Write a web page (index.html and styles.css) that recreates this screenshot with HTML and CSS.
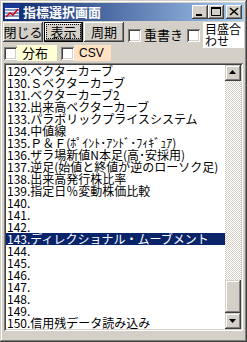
FILE: index.html
```html
<!DOCTYPE html>
<html lang="ja">
<head>
    <meta charset="UTF-8">
    <title>指標選択画面</title>
    <link rel="stylesheet" href="styles.css">
</head>
<body>
    <div class="window">
        <div class="titlebar">
            <svg class="app-icon" width="16" height="16" viewBox="0 0 16 16">
                <rect x="0" y="0" width="16" height="16" fill="#1a3a9a"/>
                <rect x="1" y="1" width="14" height="14" fill="#fff"/>
                <rect x="1" y="1" width="14" height="3" fill="#1a3a9a"/>
                <path d="M1 6h14M1 9h14M1 12h14" stroke="#1a3a9a" stroke-width="1"/>
                <path d="M2 13l4-4 3 2 5-6" stroke="#e00000" stroke-width="1.5" fill="none"/>
            </svg>
            <span class="title">指標選択画面</span>
            <div class="caption-buttons">
                <span class="cap-btn">
                    <svg width="16" height="14" viewBox="0 0 16 14"><rect x="4" y="9" width="6" height="2" fill="#000"/></svg>
                </span>
                <span class="cap-btn">
                    <svg width="16" height="14" viewBox="0 0 16 14"><path d="M3.5 2.5h9v8h-9z" stroke="#000" fill="none"/><rect x="3" y="2" width="10" height="2" fill="#000"/></svg>
                </span>
                <span class="cap-btn close">
                    <svg width="16" height="14" viewBox="0 0 16 14"><path d="M4 3l8 7M12 3l-8 7" stroke="#000" stroke-width="1.6"/></svg>
                </span>
            </div>
        </div>

        <div class="client">
            <div class="toolbar">
                <button class="btn">閉じる</button>
                <button class="btn default"><span class="focus">表示</span></button>
                <button class="btn">周期</button>
                <label class="check overwrite"><span class="box"></span><span class="label">重書き</span></label>
                <label class="check scale"><span class="box"></span><span class="label white">目盛合<br>わせ</span></label>
            </div>

            <div class="options">
                <label class="check"><span class="box"></span><span class="label yellow">分布</span></label>
                <label class="check"><span class="box"></span><span class="label peach">CSV</span></label>
            </div>

            <div class="listbox">
                <ul class="items">
                    <li>129.ベクターカーブ</li>
                    <li>130.Ｓベクターカーブ</li>
                    <li>131.ベクターカーブ2</li>
                    <li>132.出来高ベクターカーブ</li>
                    <li>133.パラボリックプライスシステム</li>
                    <li>134.中値線</li>
                    <li>135.Ｐ＆Ｆ(ﾎﾟｲﾝﾄ･ｱﾝﾄﾞ･ﾌｨｷﾞｭｱ)</li>
                    <li>136.ザラ場新値N本足(高･安採用)</li>
                    <li>137.逆足(始値と終値が逆のローソク足)</li>
                    <li>138.出来高発行株比率</li>
                    <li>139.指定日％変動株価比較</li>
                    <li>140.</li>
                    <li>141.</li>
                    <li>142.</li>
                    <li class="selected">143.ディレクショナル・ムーブメント</li>
                    <li>144.</li>
                    <li>145.</li>
                    <li>146.</li>
                    <li>147.</li>
                    <li>148.</li>
                    <li>149.</li>
                    <li>150.信用残データ読み込み</li>
                </ul>
                <div class="scrollbar">
                    <span class="arrow-btn">
                        <svg width="16" height="16" viewBox="0 0 16 16"><path d="M4 9h7l-3.5-4z" fill="#000"/></svg>
                    </span>
                    <div class="track">
                        <span class="thumb"></span>
                    </div>
                    <span class="arrow-btn">
                        <svg width="16" height="16" viewBox="0 0 16 16"><path d="M4 6h7l-3.5 4z" fill="#000"/></svg>
                    </span>
                </div>
            </div>
        </div>
    </div>
</body>
</html>
```

FILE: styles.css
```css
body {
    margin: 0;
    font-family: "Noto Sans CJK JP", "Liberation Sans", sans-serif;
    font-size: 12px;
}

.window {
    width: 247px;
    height: 342px;
    box-sizing: border-box;
    padding: 3px;
    background: #d4d0c8;
    box-shadow: inset -1px -1px #404040, inset 1px 1px #d4d0c8,
                inset -2px -2px #808080, inset 2px 2px #fff;
    display: flex;
    flex-direction: column;
}

/* title bar */
.titlebar {
    height: 18px;
    flex: none;
    display: flex;
    align-items: center;
    padding-left: 1px;
    background: linear-gradient(to right, #0a246a, #a6caf0);
}

.app-icon {
    flex: none;
}

.title {
    margin-left: 3px;
    color: #fff;
    font-weight: bold;
    font-size: 13px;
    line-height: 16px;
    white-space: nowrap;
}

.caption-buttons {
    margin-left: auto;
    margin-right: 2px;
    display: flex;
}

.cap-btn {
    width: 16px;
    height: 14px;
    background: #d4d0c8;
    box-shadow: inset -1px -1px #404040, inset 1px 1px #fff,
                inset -2px -2px #808080, inset 2px 2px #d4d0c8;
}

.cap-btn svg {
    display: block;
}

.cap-btn.close {
    margin-left: 2px;
}

/* client area */
.client {
    flex: 1;
    display: flex;
    flex-direction: column;
    padding-top: 1px;
}

.toolbar {
    display: flex;
    align-items: flex-start;
    height: 26px;
    flex: none;
}

.btn {
    flex: none;
    width: 40px;
    height: 20px;
    margin: 0 1px 0 0;
    padding: 0;
    border: none;
    background: #d4d0c8;
    font-family: inherit;
    font-size: 13px;
    line-height: 14px;
    color: #000;
    white-space: nowrap;
    box-shadow: inset -1px -1px #404040, inset 1px 1px #fff,
                inset -2px -2px #808080, inset 2px 2px #d4d0c8;
}

.btn.default {
    width: 39px;
    box-shadow: inset 0 0 0 1px #000, inset -2px -2px #404040, inset 2px 2px #fff,
                inset -3px -3px #808080;
}

.btn.default .focus {
    display: inline-block;
    padding: 0 3px;
    line-height: 13px;
    outline: 1px dotted #000;
}

.check {
    display: flex;
    align-items: center;
    flex: none;
}

.label {
    white-space: nowrap;
}

.box {
    flex: none;
    width: 13px;
    height: 13px;
    background: #fff;
    box-shadow: inset 1px 1px #808080, inset -1px -1px #fff,
                inset 2px 2px #404040, inset -2px -2px #d4d0c8;
}

.overwrite {
    margin: 6px 0 0 3px;
}

.overwrite .label {
    margin-left: 3px;
    font-size: 13px;
    line-height: 14px;
}

.scale {
    margin-left: 4px;
}

.label.white {
    margin-left: 3px;
    width: 41px;
    height: 26px;
    padding: 1px 0 0 2px;
    box-sizing: border-box;
    background: #fff;
    font-size: 12px;
    line-height: 12px;
}

.options {
    display: flex;
    height: 16px;
    margin-top: -3px;
    gap: 3px;
    flex: none;
}

.options .check {
    align-items: stretch;
}

.options .box {
    margin-top: 2px;
    margin-left: 1px;
}

.options .label {
    padding: 0 3px 0 5px;
    font-size: 13px;
    line-height: 16px;
}

.label.yellow {
    width: 32px;
    background: #ffffd4;
}

.label.peach {
    width: 29px;
    background: #ffe2c4;
    font-family: "Liberation Sans", sans-serif;
    font-size: 12px;
}

/* list */
.listbox {
    margin: 2px 1px 0 1px;
    height: 268px;
    flex: none;
    box-sizing: border-box;
    padding: 2px;
    background: #fff;
    box-shadow: inset 1px 1px #808080, inset -1px -1px #fff,
                inset 2px 2px #404040, inset -2px -2px #d4d0c8;
    display: flex;
}

.items {
    flex: 1;
    margin: 0;
    padding: 0;
    list-style: none;
    overflow: hidden;
}

.items li {
    height: 12px;
    line-height: 12px;
    padding-left: 1px;
    white-space: nowrap;
    font-size: 12px;
    color: #000;
}

.items li.selected {
    background: #0a246a;
    color: #fff;
}

.scrollbar {
    width: 16px;
    flex: none;
    display: flex;
    flex-direction: column;
}

.arrow-btn {
    height: 16px;
    background: #d4d0c8;
    box-shadow: inset -1px -1px #404040, inset 1px 1px #d4d0c8,
                inset -2px -2px #808080, inset 2px 2px #fff;
}

.arrow-btn svg {
    display: block;
}

.track {
    flex: 1;
    display: flex;
    flex-direction: column;
    justify-content: flex-end;
    background: repeating-conic-gradient(#fff 0 25%, #d4d0c8 0 50%) 0 0 / 2px 2px;
}

.thumb {
    height: 33px;
    background: #d4d0c8;
    box-shadow: inset -1px -1px #404040, inset 1px 1px #d4d0c8,
                inset -2px -2px #808080, inset 2px 2px #fff;
}
```
